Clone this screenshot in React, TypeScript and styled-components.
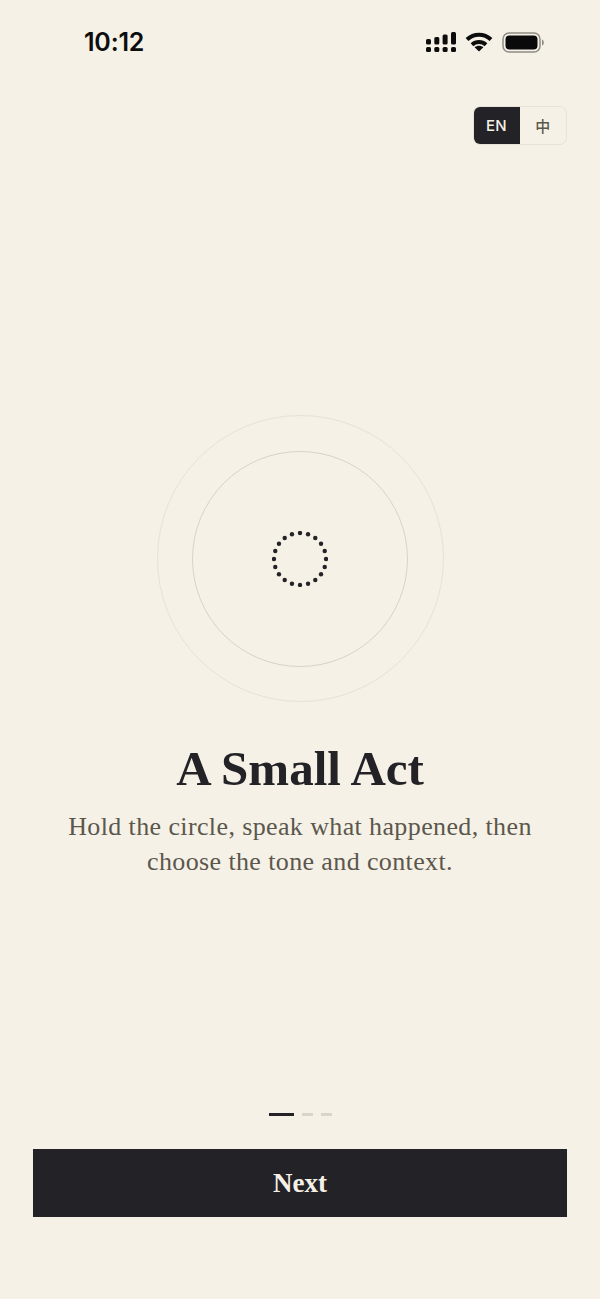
import React from 'react';
import styled, { createGlobalStyle } from 'styled-components';

const GlobalStyle = createGlobalStyle`
  html, body {
    margin: 0;
    padding: 0;
    background: #f6f1e7;
  }
`;

const Page = styled.div`
  width: 600px;
  height: 1299px;
  box-sizing: border-box;
  display: flex;
  flex-direction: column;
  background: #f6f1e7;
  color: #232226;
  overflow: hidden;
`;

const StatusBar = styled.div`
  height: 84px;
  flex: none;
  box-sizing: border-box;
  padding: 0 56px 0 84px;
  display: flex;
  align-items: center;
  justify-content: space-between;
`;

const Time = styled.span`
  font-family: Inter, 'Liberation Sans', sans-serif;
  font-size: 25px;
  font-weight: 600;
  color: #0d0d0d;
  letter-spacing: -0.2px;
`;

const StatusIcons = styled.div`
  display: flex;
  align-items: center;
  gap: 9px;
`;

const LangRow = styled.div`
  display: flex;
  justify-content: flex-end;
  padding: 22px 33px 0 0;
`;

const LangSwitch = styled.div`
  display: flex;
  height: 39px;
  box-sizing: border-box;
  border: 1px solid #e8e3d8;
  border-radius: 7px;
  overflow: hidden;
`;

const LangButton = styled.button<{ $active?: boolean }>`
  width: ${(p) => (p.$active ? '47px' : '46px')};
  margin: ${(p) => (p.$active ? '-1px 0 -1px -1px' : '0')};
  border: none;
  padding: 0;
  font-family: Inter, 'Noto Sans CJK SC', sans-serif;
  font-size: 15px;
  font-weight: 500;
  letter-spacing: 0.4px;
  background: ${(p) => (p.$active ? '#232226' : 'transparent')};
  color: ${(p) => (p.$active ? '#f6f1e7' : '#5a564c')};
`;

const Hero = styled.div`
  display: flex;
  justify-content: center;
  margin-top: 270px;
`;

const Ring = styled.div<{ $size: number; $color: string }>`
  width: ${(p) => p.$size}px;
  height: ${(p) => p.$size}px;
  box-sizing: border-box;
  border: 1px solid ${(p) => p.$color};
  border-radius: 50%;
  display: flex;
  align-items: center;
  justify-content: center;
`;

const Title = styled.h1`
  margin: 38px 0 0;
  text-align: center;
  font-family: 'Liberation Serif', serif;
  font-size: 49px;
  line-height: 58px;
  font-weight: 700;
  color: #232226;
`;

const Subtitle = styled.p`
  margin: 11px 0 0;
  text-align: center;
  font-family: 'Liberation Serif', serif;
  font-size: 26px;
  line-height: 35px;
  color: #5b574d;
  letter-spacing: 0.38px;
`;

const Footer = styled.div`
  margin-top: auto;
  padding: 0 33px 82px;
  display: flex;
  flex-direction: column;
  align-items: center;
  gap: 33px;
`;

const Progress = styled.div`
  display: flex;
  align-items: center;
  gap: 8px;
`;

const Step = styled.span<{ $active?: boolean }>`
  display: block;
  height: 3px;
  width: ${(p) => (p.$active ? '25px' : '11px')};
  background: ${(p) => (p.$active ? '#232226' : '#d9d5cb')};
`;

const NextButton = styled.button`
  width: 100%;
  height: 68px;
  border: none;
  background: #232226;
  color: #f6f1e7;
  font-family: 'Liberation Serif', serif;
  font-size: 27px;
  font-weight: 700;
`;

const SignalIcon = () => (
  <svg width="30" height="20" viewBox="0 0 30 20" fill="#0d0d0d">
    <rect x="0" y="7" width="5" height="5.5" rx="1.5" />
    <rect x="0" y="15" width="5" height="5" rx="1.5" />
    <rect x="8.3" y="5" width="5" height="7.5" rx="1.5" />
    <rect x="8.3" y="15" width="5" height="5" rx="1.5" />
    <rect x="16.6" y="2.5" width="5" height="10" rx="1.5" />
    <rect x="16.6" y="15" width="5" height="5" rx="1.5" />
    <rect x="25" y="0" width="5" height="12.5" rx="1.5" />
    <rect x="25" y="15" width="5" height="5" rx="1.5" />
  </svg>
);

const WifiIcon = () => (
  <svg width="28" height="20" viewBox="0 0 28 20" fill="none" stroke="#0d0d0d" strokeWidth="4">
    <path d="M2 7.5C9 1 19 1 26 7.5" />
    <path d="M7 12.8C11 9.2 17 9.2 21 12.8" />
    <path d="M14 19.5L9.6 15.2C12.2 13.2 15.8 13.2 18.4 15.2Z" fill="#0d0d0d" stroke="none" />
  </svg>
);

const BatteryIcon = () => (
  <svg width="42" height="21" viewBox="0 0 42 21">
    <rect x="1" y="1" width="37" height="19" rx="6" fill="none" stroke="#8f8c85" strokeWidth="1.5" />
    <rect x="3.5" y="3.5" width="32" height="14" rx="4" fill="#0a0a0a" />
    <path d="M40 7.5C41.3 8 41.8 9 41.8 10.5C41.8 12 41.3 13 40 13.5Z" fill="#8f8c85" />
  </svg>
);

const DotCircle = () => {
  const dots = Array.from({ length: 20 }, (_, i) => (i * Math.PI) / 10);
  return (
    <svg width="56" height="56" viewBox="0 0 56 56">
      {dots.map((a) => (
        <circle key={a} cx={28 + 26 * Math.sin(a)} cy={28 - 26 * Math.cos(a)} r="2.2" fill="#232226" />
      ))}
    </svg>
  );
};

export default function App() {
  return (
    <Page>
      <GlobalStyle />
      <StatusBar>
        <Time>10:12</Time>
        <StatusIcons>
          <SignalIcon />
          <WifiIcon />
          <BatteryIcon />
        </StatusIcons>
      </StatusBar>
      <LangRow>
        <LangSwitch>
          <LangButton $active>EN</LangButton>
          <LangButton>中</LangButton>
        </LangSwitch>
      </LangRow>
      <Hero>
        <Ring $size={287} $color="#e5e2db">
          <Ring $size={216} $color="#d6d3cc">
            <DotCircle />
          </Ring>
        </Ring>
      </Hero>
      <Title>A Small Act</Title>
      <Subtitle>
        Hold the circle, speak what happened, then
        <br />
        choose the tone and context.
      </Subtitle>
      <Footer>
        <Progress>
          <Step $active />
          <Step />
          <Step />
        </Progress>
        <NextButton>Next</NextButton>
      </Footer>
    </Page>
  );
}
